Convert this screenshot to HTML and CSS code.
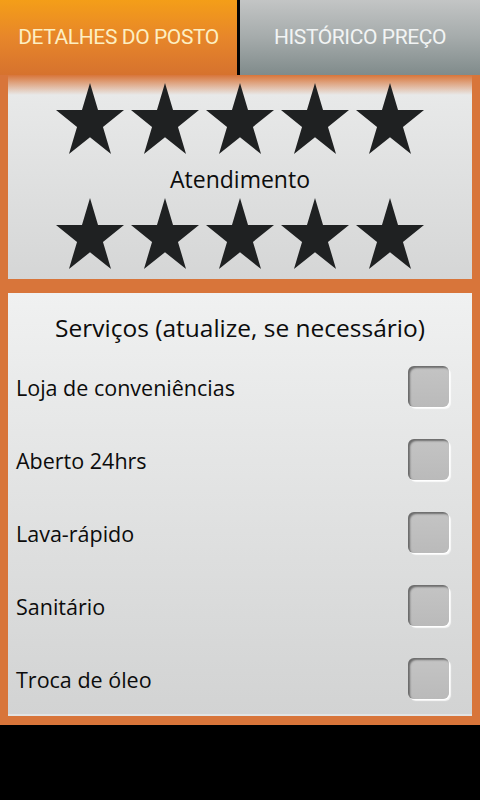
FILE: index.html
```html
<!DOCTYPE html>
<html lang="pt">
<head>
<meta charset="utf-8">
<title>Detalhes do posto</title>
<link rel="stylesheet" href="styles.css">
</head>
<body>
<div class="app">
  <div class="tabs">
    <div class="tab tab-active">DETALHES DO POSTO</div>
    <div class="tab-divider"></div>
    <div class="tab tab-inactive">HISTÓRICO PREÇO</div>
  </div>
  <div class="panel panel-rating">
    <div class="stars">
      <svg class="star" viewBox="-95.1 -100 190.2 180.9" preserveAspectRatio="none"><polygon points="0,-100 22.45,-30.9 95.1,-30.9 36.3,11.8 58.8,80.9 0,38.2 -58.8,80.9 -36.3,11.8 -95.1,-30.9 -22.45,-30.9"/></svg>
      <svg class="star" viewBox="-95.1 -100 190.2 180.9" preserveAspectRatio="none"><polygon points="0,-100 22.45,-30.9 95.1,-30.9 36.3,11.8 58.8,80.9 0,38.2 -58.8,80.9 -36.3,11.8 -95.1,-30.9 -22.45,-30.9"/></svg>
      <svg class="star" viewBox="-95.1 -100 190.2 180.9" preserveAspectRatio="none"><polygon points="0,-100 22.45,-30.9 95.1,-30.9 36.3,11.8 58.8,80.9 0,38.2 -58.8,80.9 -36.3,11.8 -95.1,-30.9 -22.45,-30.9"/></svg>
      <svg class="star" viewBox="-95.1 -100 190.2 180.9" preserveAspectRatio="none"><polygon points="0,-100 22.45,-30.9 95.1,-30.9 36.3,11.8 58.8,80.9 0,38.2 -58.8,80.9 -36.3,11.8 -95.1,-30.9 -22.45,-30.9"/></svg>
      <svg class="star" viewBox="-95.1 -100 190.2 180.9" preserveAspectRatio="none"><polygon points="0,-100 22.45,-30.9 95.1,-30.9 36.3,11.8 58.8,80.9 0,38.2 -58.8,80.9 -36.3,11.8 -95.1,-30.9 -22.45,-30.9"/></svg>
    </div>
    <div class="rating-label">Atendimento</div>
    <div class="stars">
      <svg class="star" viewBox="-95.1 -100 190.2 180.9" preserveAspectRatio="none"><polygon points="0,-100 22.45,-30.9 95.1,-30.9 36.3,11.8 58.8,80.9 0,38.2 -58.8,80.9 -36.3,11.8 -95.1,-30.9 -22.45,-30.9"/></svg>
      <svg class="star" viewBox="-95.1 -100 190.2 180.9" preserveAspectRatio="none"><polygon points="0,-100 22.45,-30.9 95.1,-30.9 36.3,11.8 58.8,80.9 0,38.2 -58.8,80.9 -36.3,11.8 -95.1,-30.9 -22.45,-30.9"/></svg>
      <svg class="star" viewBox="-95.1 -100 190.2 180.9" preserveAspectRatio="none"><polygon points="0,-100 22.45,-30.9 95.1,-30.9 36.3,11.8 58.8,80.9 0,38.2 -58.8,80.9 -36.3,11.8 -95.1,-30.9 -22.45,-30.9"/></svg>
      <svg class="star" viewBox="-95.1 -100 190.2 180.9" preserveAspectRatio="none"><polygon points="0,-100 22.45,-30.9 95.1,-30.9 36.3,11.8 58.8,80.9 0,38.2 -58.8,80.9 -36.3,11.8 -95.1,-30.9 -22.45,-30.9"/></svg>
      <svg class="star" viewBox="-95.1 -100 190.2 180.9" preserveAspectRatio="none"><polygon points="0,-100 22.45,-30.9 95.1,-30.9 36.3,11.8 58.8,80.9 0,38.2 -58.8,80.9 -36.3,11.8 -95.1,-30.9 -22.45,-30.9"/></svg>
    </div>
  </div>
  <div class="panel panel-services">
    <div class="services-title">Serviços (atualize, se necessário)</div>
    <div class="service-row"><span class="service-name">Loja de conveniências</span><span class="checkbox"></span></div>
    <div class="service-row"><span class="service-name">Aberto 24hrs</span><span class="checkbox"></span></div>
    <div class="service-row"><span class="service-name">Lava-rápido</span><span class="checkbox"></span></div>
    <div class="service-row"><span class="service-name">Sanitário</span><span class="checkbox"></span></div>
    <div class="service-row"><span class="service-name">Troca de óleo</span><span class="checkbox"></span></div>
  </div>
</div>
</body>
</html>
```

FILE: styles.css
```css
html, body {
  margin: 0;
  padding: 0;
  background: #000;
}
body {
  width: 480px;
  height: 800px;
  font-family: "Open Sans", "DejaVu Sans", sans-serif;
  color: #0c0c0c;
}
.app {
  background: #d8753a;
  height: 725px;
  display: flex;
  flex-direction: column;
}
.tabs {
  display: flex;
  height: 75px;
}
.tab {
  display: flex;
  align-items: center;
  justify-content: center;
  font-family: Roboto, "Open Sans", sans-serif;
  font-size: 21px;
  letter-spacing: -0.4px;
  padding-bottom: 1px;
  box-sizing: border-box;
}
.tab-active {
  width: 237px;
  background: linear-gradient(to bottom, #f49e18 0%, #e7862a 50%, #d6722e 100%);
  color: #fdefc2;
}
.tab-divider {
  width: 3px;
  background: #050505;
}
.tab-inactive {
  flex: 1;
  background: linear-gradient(to bottom, #c3c5c5 0%, #a5abab 50%, #808b8b 100%);
  color: #f2f4f4;
}
.panel {
  margin: 0 8px;
}
.panel-rating {
  height: 204px;
  background:
    linear-gradient(to bottom, #d8753a 0px, rgba(232,233,233,0) 20px),
    linear-gradient(to bottom, #eaebeb 0%, #d5d6d6 100%);
  display: flex;
  flex-direction: column;
  align-items: center;
  padding-top: 8px;
  box-sizing: border-box;
}
.stars {
  display: flex;
  gap: 7px;
}
.star {
  width: 68px;
  height: 71px;
  display: block;
}
.star polygon {
  fill: #1f2122;
}
.rating-label {
  font-size: 23px;
  line-height: 44px;
  padding-top: 3px;
  margin-bottom: -3px;
}
.panel-services {
  margin-top: 14px;
  height: 423px;
  box-sizing: border-box;
  background: linear-gradient(to bottom, #f0f1f1 0%, #d2d3d3 100%);
  border-bottom: 2px solid #e3e3e3;
  padding-top: 15px;
}
.services-title {
  text-align: center;
  font-size: 24.5px;
  line-height: 40px;
  margin-bottom: 2px;
}
.service-row {
  height: 73px;
  display: flex;
  align-items: center;
  justify-content: space-between;
  padding: 2px 23px 0 8px;
  box-sizing: border-box;
}
.service-name {
  font-size: 21.5px;
}
.checkbox {
  width: 41px;
  height: 41px;
  margin-top: -3px;
  border-radius: 6px;
  background: linear-gradient(to bottom, #c4c4c4, #bababa);
  box-shadow: inset 2px 2px 2px rgba(0,0,0,0.45), 1px 1px 0 #ffffff, 2px 2px 1px rgba(255,255,255,0.8);
}
```
